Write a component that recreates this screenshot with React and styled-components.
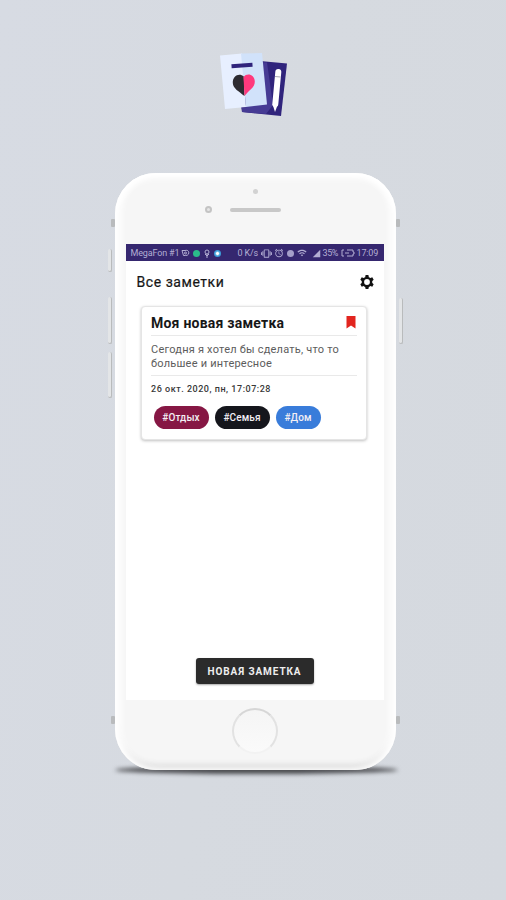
import React from 'react'
import styled, { createGlobalStyle } from 'styled-components'
import { MdVibration, MdAlarm, MdWifi, MdSignalCellular4Bar } from 'react-icons/md'

const tags = [
  { name: '#Отдых', color: '#861744', width: 55 },
  { name: '#Семья', color: '#15161c', width: 55 },
  { name: '#Дом', color: '#397cda', width: 45 },
]

const sideButtons = [
  { side: 'left', top: 76, height: 23 },
  { side: 'left', top: 124, height: 47 },
  { side: 'left', top: 179, height: 46 },
  { side: 'right', top: 125, height: 46 },
]

const antennas = [
  { side: 'left', top: 46 },
  { side: 'right', top: 46 },
  { side: 'left', top: 543 },
  { side: 'right', top: 543 },
]

function Logo() {
  return (
    <LogoIcon viewBox="0 0 70 68">
      <polygon points="40,8 67,10.5 61,63 22,59 21,53" fill="#30247c" />
      <polygon points="40,9 47,9.5 53,52 46,61 22,59 22,55 45,50" fill="#463b94" />
      <polygon points="0,2.5 22,0.5 26,54 5,56" fill="#e7efff" />
      <polygon points="21,0.6 42,0 47,51.5 26,54" fill="#d1e2fa" />
      <path d="M11.5 13.3 32.5 11.8" stroke="#30247c" strokeWidth="4" />
      <path d="M23.8 23.5C19 19.5 12.5 23 12.8 30C13 35.5 19 38.5 24.5 43Z" fill="#2d2b31" />
      <path d="M23.5 24C27 19.5 34.5 21.3 34.8 28.5C35 34.5 29 37 24.5 43Z" fill="#ff397d" />
      <path d="M58.3 19 55.3 51" stroke="#fff" strokeWidth="6" strokeLinecap="round" />
      <polygon points="52.5,51 58,51 55,59" fill="#fff" />
      <path d="M55 23.5 60.5 24" stroke="#aaa9b5" strokeWidth="1" />
    </LogoIcon>
  )
}

function Gear() {
  return (
    <svg width="16" height="16" viewBox="-8 -8 16 16">
      <circle r="4.1" fill="none" stroke="#111" strokeWidth="2.4" />
      {[0, 60, 120].map((angle) => (
        <g key={angle} transform={`rotate(${angle})`} fill="#111">
          <path d="M-1.4-6.9H1.4L1.9-4.4H-1.9ZM-1.4 6.9H1.4L1.9 4.4H-1.9Z" />
        </g>
      ))}
    </svg>
  )
}

export default function App() {
  return (
    <>
      <GlobalStyle />
      <Page>
        <Logo />
        <PhoneWrap>
          <Shadow />
          {sideButtons.map((button, i) => <SideButton key={i} {...toTransient(button)} />)}
          {antennas.map((antenna, i) => <Antenna key={i} {...toTransient(antenna)} />)}
          <Phone>
            <Forehead>
              <Sensor />
              <Speaker>
                <Camera />
                <Slit />
              </Speaker>
            </Forehead>
            <Screen>
              <StatusBar>
                <StatusText $width={48}>MegaFon #1</StatusText>
                <svg width="9" height="8" viewBox="0 0 9 8" fill="none" stroke="currentColor">
                  <path d="M1 1.5H4M1 1.5 2.5 6.5M4 1.5C9 0 9 7 4.5 6.5H2.5" />
                  <circle cx="4.5" cy="4" r="1" />
                </svg>
                <Dot $color="#2bbd8a" />
                <svg width="8" height="9" viewBox="0 0 8 9" fill="none" stroke="currentColor">
                  <circle cx="4" cy="3" r="2" />
                  <path d="M4 5V9M2 5 4 7 6 5" />
                </svg>
                <Dot $color="#3b9bd8" $core />
                <Spacer />
                <StatusText $width={21}>0 K/s</StatusText>
                <MdVibration size={11} />
                <MdAlarm size={10} />
                <Dot $color="#a59fc9" />
                <MdWifi size={10} />
                <Signal size={9} />
                <StatusText $width={16} $tight>35%</StatusText>
                <svg width="14" height="8" viewBox="0 0 14 8" fill="none" stroke="currentColor">
                  <path d="M3 1H1V7H3M4 4H8M6 1H12V3H13V5H12V7H6" />
                </svg>
                <StatusText $width={21}>17:09</StatusText>
              </StatusBar>
              <Header>
                <Heading>Все заметки</Heading>
                <Gear />
              </Header>
              <Card>
                <CardTop>
                  <CardTitle>Моя новая заметка</CardTitle>
                  <Bookmark viewBox="0 0 10 13">
                    <path d="M0.5 0H9.5V12.5L5 9.5 0.5 12.5Z" fill="#e2251f" />
                  </Bookmark>
                </CardTop>
                <CardText>
                  Сегодня я хотел бы сделать, что то
                  <br />
                  большее и интересное
                </CardText>
                <CardDate>26 окт. 2020, пн, 17:07:28</CardDate>
                <Tags>
                  {tags.map(({ name, color, width }) => (
                    <Tag key={name} $color={color} $width={width}>{name}</Tag>
                  ))}
                </Tags>
              </Card>
              <NewNote>НОВАЯ ЗАМЕТКА</NewNote>
            </Screen>
            <Chin>
              <HomeButton />
            </Chin>
          </Phone>
        </PhoneWrap>
      </Page>
    </>
  )
}

function toTransient({ side, top, height }) {
  return { $side: side, $top: top, $height: height }
}

const GlobalStyle = createGlobalStyle`
  * {
    box-sizing: border-box;
  }
  body {
    margin: 0;
    font-family: Roboto, "Liberation Sans", sans-serif;
  }
  svg {
    flex: none;
    display: block;
  }
`

const Page = styled.div`
  height: 900px;
  padding-top: 53px;
  display: flex;
  flex-direction: column;
  align-items: center;
  background: linear-gradient(100deg, #d7dbe3 0%, #d6dae0 50%, #d5d9df 100%);
`

const LogoIcon = styled.svg`
  width: 70px;
  height: 68px;
  margin-left: 3px;
`

const PhoneWrap = styled.div`
  position: relative;
  width: 281px;
  height: 597px;
  margin: 52px 0 0 4px;
`

const Shadow = styled.div`
  position: absolute;
  left: 0;
  right: -2px;
  bottom: -4px;
  height: 8px;
  border-radius: 50%;
  background: #4a4b4f;
  filter: blur(2px);
`

const Phone = styled.div`
  position: relative;
  height: 100%;
  padding: 0 11px;
  display: flex;
  flex-direction: column;
  border-radius: 41px;
  background: #f6f6f6;
  box-shadow: inset 0 5px 7px #fff, inset 6px 0 6px #fff, inset -6px 0 6px #fff,
    inset 0 -5px 6px #d8d8d8;
`

const SideButton = styled.div`
  position: absolute;
  top: ${({ $top }) => $top}px;
  ${({ $side }) => $side}: -7px;
  width: 4px;
  height: ${({ $height }) => $height}px;
  border-radius: 2px;
  border: solid #b9bbbc;
  border-width: 0 1px 1px 0;
  background: #e3e5e7;
`

const Antenna = styled.div`
  position: absolute;
  top: ${({ $top }) => $top}px;
  ${({ $side }) => $side}: -4px;
  width: 4px;
  height: 8px;
  border-radius: 1px;
  background: #b9bbbd;
`

const Forehead = styled.div`
  position: relative;
  height: 71px;
  flex: none;
  display: flex;
  justify-content: center;
`

const Sensor = styled.div`
  position: absolute;
  left: 79px;
  top: 33px;
  width: 7px;
  height: 7px;
  border: 2px solid #c4c4c4;
  border-radius: 50%;
  background: #e6e6e6;
`

const Speaker = styled.div`
  display: flex;
  flex-direction: column;
  align-items: center;
  padding-top: 16px;
`

const Camera = styled.div`
  width: 5px;
  height: 5px;
  border-radius: 50%;
  background: #d2d2d2;
`

const Slit = styled.div`
  width: 51px;
  height: 4px;
  margin-top: 14px;
  border-radius: 2px;
  background: #c8c8c8;
`

const Screen = styled.div`
  width: 258px;
  height: 456px;
  display: flex;
  flex-direction: column;
  background: #fff;
`

const StatusBar = styled.div`
  height: 17px;
  flex: none;
  padding: 1px 6px 0 5px;
  display: flex;
  align-items: center;
  gap: 2px;
  color: #b3aed3;
  background: #35276f;
`

const StatusText = styled.span`
  width: ${({ $width }) => $width}px;
  flex: none;
  font-size: 9px;
  letter-spacing: ${({ $tight }) => $tight ? -0.4 : -0.15}px;
  white-space: nowrap;
`

const Signal = styled(MdSignalCellular4Bar)`
  margin-left: 3px;
`

const Dot = styled.i`
  width: 7px;
  height: 7px;
  margin: 0 1px;
  flex: none;
  border-radius: 50%;
  background: ${({ $color, $core }) => $core ? `radial-gradient(#fff 20%, ${$color} 50%)` : $color};
`

const Spacer = styled.div`
  flex: 1;
`

const Header = styled.header`
  height: 41px;
  padding: 0 9px 0 11px;
  display: flex;
  align-items: center;
  justify-content: space-between;
  color: #161616;
`

const Heading = styled.h1`
  margin: 0;
  font-size: 14px;
  font-weight: 400;
  letter-spacing: 0.55px;
  -webkit-text-stroke: 0.2px;
`

const Card = styled.article`
  width: 226px;
  height: 134px;
  margin: 4px 0 0 15px;
  padding: 0 9px;
  border: 1px solid #e5e5e5;
  border-radius: 4px;
  background: #fff;
  box-shadow: 0 1px 3px rgba(0, 0, 0, 0.25);
`

const CardTop = styled.div`
  height: 29px;
  padding: 3px 0 0 0.5px;
  display: flex;
  align-items: center;
  justify-content: space-between;
  border-bottom: 1px solid #e9e9e9;
`

const Bookmark = styled.svg`
  width: 10px;
  height: 13px;
  margin-right: 1px;
`

const CardTitle = styled.h2`
  margin: 0;
  color: #171717;
  font-size: 14px;
  font-weight: 700;
  letter-spacing: 0.23px;
`

const CardText = styled.p`
  height: 40px;
  margin: 0;
  padding: 7px 0 0 0.5px;
  color: #5c5c5c;
  border-bottom: 1px solid #e9e9e9;
  font-size: 11px;
  line-height: 14px;
  letter-spacing: 0.22px;
  white-space: nowrap;
`

const CardDate = styled.div`
  padding: 6px 0 0 0.5px;
  color: #383838;
  font-size: 9px;
  font-weight: 500;
  line-height: 14px;
  letter-spacing: 0.52px;
`

const Tags = styled.div`
  display: flex;
  gap: 6px;
  margin: 9.5px 0 0 3px;
`

const Tag = styled.span`
  width: ${({ $width }) => $width}px;
  height: 23px;
  display: flex;
  align-items: center;
  justify-content: center;
  border-radius: 12px;
  color: #f3eff4;
  background: ${({ $color }) => $color};
  font-size: 10px;
  font-weight: 500;
  letter-spacing: 0.1px;
`

const NewNote = styled.button`
  width: 118px;
  height: 26px;
  margin: auto auto 16px 70px;
  padding: 0;
  border: 0;
  border-radius: 3px;
  color: #eee;
  background: #2b2b2b;
  box-shadow: 0 1px 2px rgba(0, 0, 0, 0.35);
  font: 700 10px Roboto, sans-serif;
  letter-spacing: 0.9px;
  white-space: nowrap;
`

const Chin = styled.div`
  flex: 1;
  display: flex;
  justify-content: center;
  padding-top: 8px;
`

const HomeButton = styled.div`
  width: 46px;
  height: 46px;
  border: 2px solid;
  border-color: #d6d6d6 #e2e2e2 #f2f2f2;
  border-radius: 50%;
  background: linear-gradient(#f5f5f5, #fafafa);
`
